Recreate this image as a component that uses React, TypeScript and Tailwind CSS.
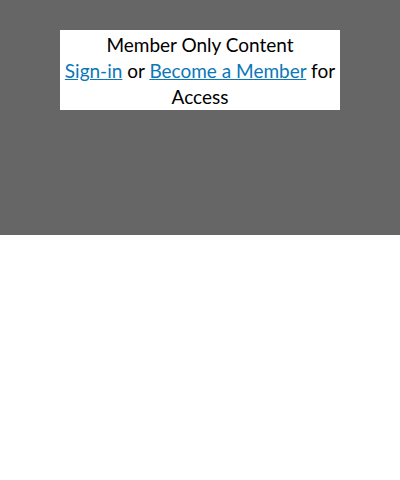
export default function App() {
  return (
    <div className="bg-white min-h-[480px]" style={{ fontFamily: 'Lato, "Open Sans", sans-serif' }}>
      <section className="bg-[#666666] h-[235px] pt-[30px]">
        <div className="mx-auto w-[280px] bg-white pt-[2px] text-center text-[19px] leading-[26px] text-black">
          <p>Member Only Content</p>
          <p className="pb-[0px]">
            <a href="#" className="text-[#0a77b7] underline">Sign-in</a> or{' '}
            <a href="#" className="text-[#0a77b7] underline">Become a Member</a> for Access
          </p>
        </div>
      </section>
    </div>
  )
}
